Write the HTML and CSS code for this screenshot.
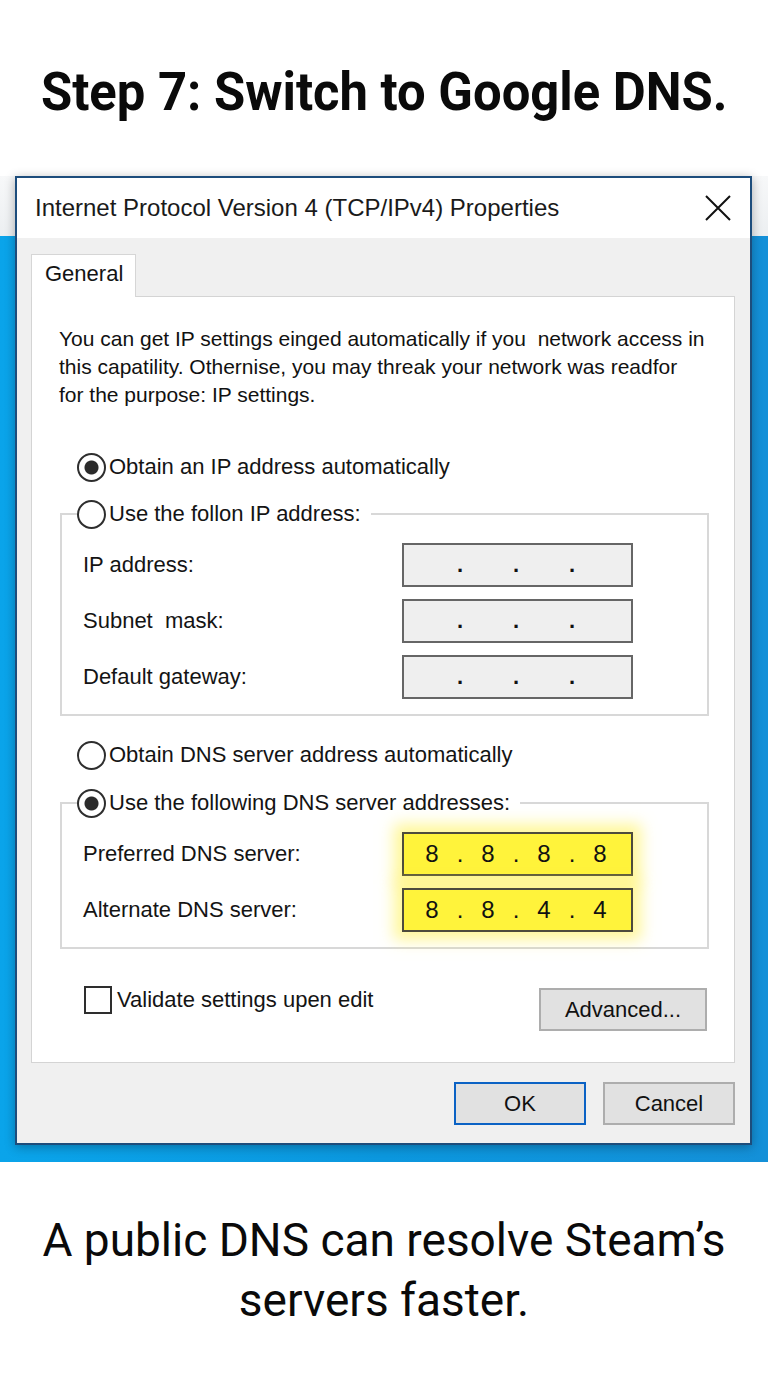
FILE: index.html
```html
<!DOCTYPE html>
<html lang="en">
<head>
	<meta charset="UTF-8">
	<title>Step 7: Switch to Google DNS</title>
	<link rel="stylesheet" href="styles.css">
</head>
<body>
	<h1 class="step"><span>Step 7: Switch to Google DNS.</span></h1>

	<div class="desk">
		<div class="dialog">
			<div class="titlebar">
				<span class="caption">Internet Protocol Version 4 (TCP/IPv4) Properties</span>
				<svg class="close" width="26" height="26" viewBox="0 0 26 26">
					<path d="M1 1 L25 25 M25 1 L1 25" stroke="#111" stroke-width="2" fill="none"/>
				</svg>
			</div>

			<div class="body">
				<div class="tabs"><span class="tab">General</span></div>

				<div class="panel">
					<p class="intro">You can get IP settings einged automatically if you&nbsp; network access in<br>this capatility. Othernise, you may threak your network was readfor<br>for the purpose: IP settings.</p>

					<div class="opt on first">Obtain an IP address automatically</div>

					<fieldset class="group">
						<legend><span class="opt">Use the follon IP address:</span></legend>
						<div class="fields">
							<span>IP address:</span>
							<div class="ip"><span class="oct"></span><span class="dot">.</span><span class="oct"></span><span class="dot">.</span><span class="oct"></span><span class="dot">.</span><span class="oct"></span></div>
							<span>Subnet&nbsp; mask:</span>
							<div class="ip"><span class="oct"></span><span class="dot">.</span><span class="oct"></span><span class="dot">.</span><span class="oct"></span><span class="dot">.</span><span class="oct"></span></div>
							<span>Default gateway:</span>
							<div class="ip"><span class="oct"></span><span class="dot">.</span><span class="oct"></span><span class="dot">.</span><span class="oct"></span><span class="dot">.</span><span class="oct"></span></div>
						</div>
					</fieldset>

					<div class="opt second">Obtain DNS server address automatically</div>

					<fieldset class="group dns">
						<legend><span class="opt on">Use the following DNS server addresses:</span></legend>
						<div class="fields">
							<span>Preferred DNS server:</span>
							<div class="ip mark"><span class="oct">8</span><span class="dot">.</span><span class="oct">8</span><span class="dot">.</span><span class="oct">8</span><span class="dot">.</span><span class="oct">8</span></div>
							<span>Alternate DNS server:</span>
							<div class="ip mark"><span class="oct">8</span><span class="dot">.</span><span class="oct">8</span><span class="dot">.</span><span class="oct">4</span><span class="dot">.</span><span class="oct">4</span></div>
						</div>
					</fieldset>

					<div class="foot">
						<span class="check">Validate settings upen edit</span>
						<button class="btn adv">Advanced...</button>
					</div>
				</div>

				<div class="actions">
					<button class="btn ok">OK</button>
					<button class="btn">Cancel</button>
				</div>
			</div>
		</div>
	</div>

	<p class="note">A public DNS can resolve Steam’s<br>servers faster.</p>
</body>
</html>
```

FILE: styles.css
```css
*{
	box-sizing:border-box;
}
body{
	margin:0;
	width:768px;
	background:#fff;
	font-family:"Liberation Sans",Arial,sans-serif;
	color:#141414;
}

/* heading above the window */
.step{
	margin:0;
	height:176px;
	padding-top:60px;
	text-align:center;
	font:700 54px/64px Roboto,"Liberation Sans",sans-serif;
	color:#0a0a0a;
}
.step span{
	display:inline-block;
	transform:scaleX(0.94);
	white-space:nowrap;
}

/* desktop strip behind the window */
.desk{
	height:986px;
	padding-left:15px;
	background:
		linear-gradient(#f7f8f9,#eceff1) 0 0/100% 60px no-repeat,
		linear-gradient(90deg,#0aa4ea,#0b97de 50%,#1490d8);
}
.dialog{
	width:737px;
	height:969px;
	border:2px solid #1d4d7c;
	background:#f0f0f0;
	box-shadow:0 2px 10px rgba(0,0,0,0.3);
}
.titlebar{
	height:60px;
	background:#fff;
	display:flex;
	align-items:center;
	justify-content:space-between;
	padding:0 19px 0 18px;
}
.caption{
	font-size:24px;
	color:#1a1a1a;
}
.close{
	display:block;
}

.body{
	padding:16px 15px 0 14px;
}
.tabs{
	display:flex;
}
.tab{
	width:105px;
	height:43px;
	margin-bottom:-1px;
	padding:6px 0 0 13px;
	background:#fff;
	border:1px solid #d6d6d6;
	border-bottom:none;
	font-size:22px;
	position:relative;
	z-index:1;
}
.panel{
	height:767px;
	background:#fff;
	border:1px solid #d4d4d4;
	padding:0 25px 0 0;
}
.intro{
	margin:28px 0 0 27px;
	font-size:21px;
	line-height:28px;
	white-space:nowrap;
	color:#111;
}

/* radio options */
.opt{
	display:flex;
	align-items:center;
	gap:3px;
	height:28px;
	font-size:22px;
	white-space:nowrap;
}
.opt::before{
	content:"";
	width:25px;
	height:25px;
	flex:none;
	border:2px solid #2e2e2e;
	border-radius:50%;
	background:#fff;
}
.opt.on::before{
	background:radial-gradient(circle,#2b2b2b 0 6.5px,#fff 7.5px);
}
.opt.first{
	margin:44px 0 0 45px;
}
.opt.second{
	margin:25px 0 0 45px;
}

.group{
	margin:19px 0 0 28px;
	border:2px solid #d8d8d8;
	padding:15px 24px 15px 21px;
	min-width:0;
}
.group.dns{
	margin-top:20px;
}
.group legend{
	margin-left:-6px;
	padding:0 10px 0 0;
}
.fields{
	display:grid;
	grid-template-columns:319px 231px;
	row-gap:12px;
	align-items:center;
	font-size:22px;
}

/* address boxes */
.ip{
	height:44px;
	border:2px solid #666;
	background:#efefef;
	display:flex;
	align-items:center;
	font-size:24px;
	color:#111;
}
.oct{
	width:56px;
	text-align:center;
}
.dot{
	width:0;
	display:flex;
	justify-content:center;
	font-size:22px;
	font-weight:700;
}
.ip.mark{
	background:#fff33b;
	border-color:#4d4b3c;
	box-shadow:0 0 14px 8px rgba(255,240,70,0.55);
}
.ip.mark .dot{
	font-weight:400;
	font-size:24px;
}

.foot{
	margin-top:38px;
	display:flex;
	justify-content:space-between;
	align-items:flex-start;
	padding-left:52px;
}
.check{
	display:flex;
	align-items:center;
	gap:5px;
	height:26px;
	font-size:22px;
}
.check::before{
	content:"";
	width:24px;
	height:24px;
	border:2px solid #2e2e2e;
	background:#fff;
}

.btn{
	height:43px;
	background:#e1e1e1;
	border:2px solid #adadad;
	font:22px "Liberation Sans",Arial,sans-serif;
	color:#111;
	padding:0;
}
.btn.adv{
	width:168px;
	margin:1px 2px 0 0;
}
.actions{
	display:flex;
	justify-content:flex-end;
	gap:17px;
	margin-top:19px;
}
.actions .btn{
	width:132px;
}
.btn.ok{
	border-color:#0b62c4;
}

/* caption under the window */
.note{
	margin:0;
	padding-top:48px;
	text-align:center;
	font:400 46px/60px Roboto,"Liberation Sans",sans-serif;
	color:#0a0a0a;
}
```
